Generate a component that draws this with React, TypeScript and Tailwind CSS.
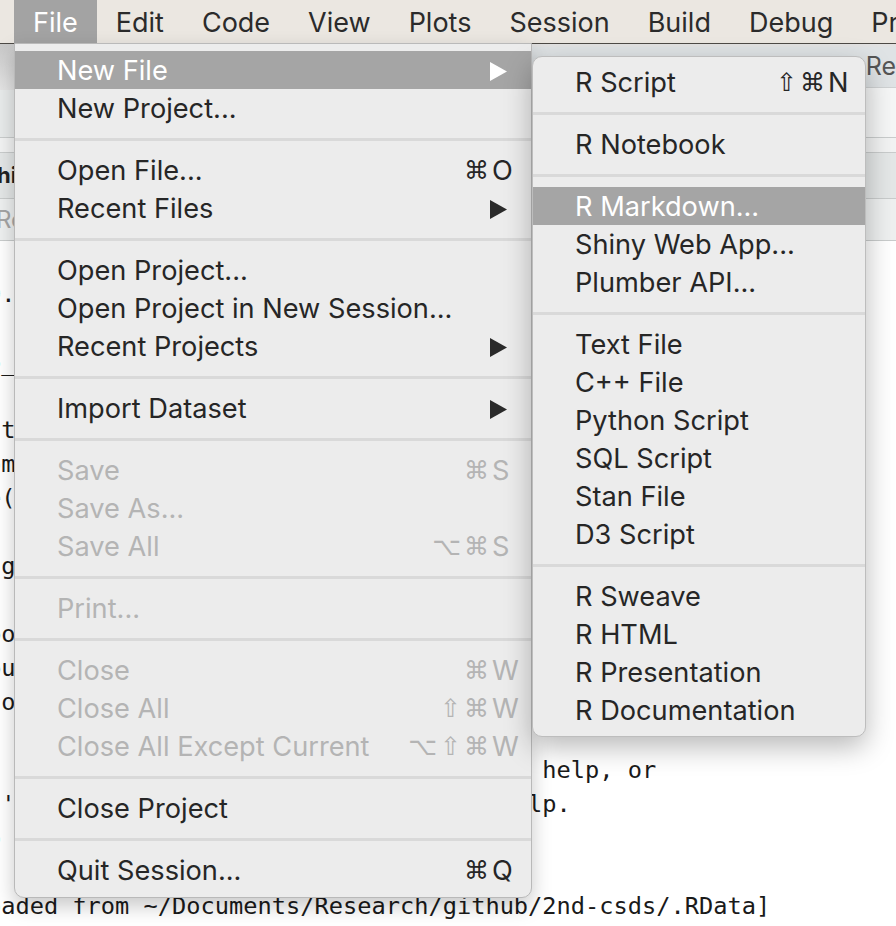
import React from 'react';

type Item =
  | { kind: 'sep' }
  | {
      kind: 'item';
      label: string;
      mods?: string;
      keyChar?: string;
      arrow?: boolean;
      disabled?: boolean;
      active?: boolean;
    };

const sep: Item = { kind: 'sep' };

const fileMenu: Item[] = [
  { kind: 'item', label: 'New File', arrow: true, active: true },
  { kind: 'item', label: 'New Project...' },
  sep,
  { kind: 'item', label: 'Open File...', mods: '⌘', keyChar: 'O' },
  { kind: 'item', label: 'Recent Files', arrow: true },
  sep,
  { kind: 'item', label: 'Open Project...' },
  { kind: 'item', label: 'Open Project in New Session...' },
  { kind: 'item', label: 'Recent Projects', arrow: true },
  sep,
  { kind: 'item', label: 'Import Dataset', arrow: true },
  sep,
  { kind: 'item', label: 'Save', mods: '⌘', keyChar: 'S', disabled: true },
  { kind: 'item', label: 'Save As...', disabled: true },
  { kind: 'item', label: 'Save All', mods: '⌥⌘', keyChar: 'S', disabled: true },
  sep,
  { kind: 'item', label: 'Print...', disabled: true },
  sep,
  { kind: 'item', label: 'Close', mods: '⌘', keyChar: 'W', disabled: true },
  { kind: 'item', label: 'Close All', mods: '⇧⌘', keyChar: 'W', disabled: true },
  { kind: 'item', label: 'Close All Except Current', mods: '⌥⇧⌘', keyChar: 'W', disabled: true },
  sep,
  { kind: 'item', label: 'Close Project' },
  sep,
  { kind: 'item', label: 'Quit Session...', mods: '⌘', keyChar: 'Q' },
];

const newFileMenu: Item[] = [
  { kind: 'item', label: 'R Script', mods: '⇧⌘', keyChar: 'N' },
  sep,
  { kind: 'item', label: 'R Notebook' },
  sep,
  { kind: 'item', label: 'R Markdown...', active: true },
  { kind: 'item', label: 'Shiny Web App...' },
  { kind: 'item', label: 'Plumber API...' },
  sep,
  { kind: 'item', label: 'Text File' },
  { kind: 'item', label: 'C++ File' },
  { kind: 'item', label: 'Python Script' },
  { kind: 'item', label: 'SQL Script' },
  { kind: 'item', label: 'Stan File' },
  { kind: 'item', label: 'D3 Script' },
  sep,
  { kind: 'item', label: 'R Sweave' },
  { kind: 'item', label: 'R HTML' },
  { kind: 'item', label: 'R Presentation' },
  { kind: 'item', label: 'R Documentation' },
];

const consoleLines = [
  'R version 4.0.2 (2020-06-22) -- "Taking Off Again"',
  'Copyright (C) 2020 The R Foundation for Statistical Computing',
  'Platform: x86_64-apple-darwin17.0 (64-bit)',
  '',
  'R is free software and comes with ABSOLUTELY NO WARRANTY.',
  'You are welcome to redistribute it under certain conditions.',
  "Type 'license()' or 'licence()' for distribution details.",
  '',
  '  Natural language support but running in an English locale',
  '',
  'R is a collaborative project with many contributors.',
  "Type 'contributors()' for more information and",
  "'citation()' on how to cite R or R packages in publications.",
  '',
  "Type 'demo()' for some demos, 'help()' for on-line help, or",
  "'help.start()' for an HTML browser interface to help.",
  "Type 'q()' to quit R.",
  '',
  '[Workspace loaded from ~/Documents/Research/github/2nd-csds/.RData]',
];

const menuBar = ['File', 'Edit', 'Code', 'View', 'Plots', 'Session', 'Build', 'Debug', 'Profile', 'Tools', 'Help'];

function Arrow({ white }: { white?: boolean }) {
  return (
    <svg width="17" height="19" viewBox="0 0 17 19" className="-ml-[2px]">
      <polygon points="0,0 17,9.5 0,19" fill={white ? '#ffffff' : '#2a2a2a'} />
    </svg>
  );
}

function MenuList({ items, pr }: { items: Item[]; pr: string }) {
  return (
    <>
      {items.map((item, i) => {
        if (item.kind === 'sep') {
          return (
            <div key={i} className="h-[24px] flex items-center">
              <div className="h-[3px] w-full bg-[#d9d9d9]" />
            </div>
          );
        }
        const color = item.active
          ? 'text-white'
          : item.disabled
            ? 'text-[#b4b4b4]'
            : 'text-[#262626]';
        return (
          <div
            key={i}
            className={`flex h-[38px] items-center pt-[2px] pl-[42px] ${pr} ${color} ${item.active ? 'bg-[#a5a5a5]' : ''}`}
          >
            <span className="flex-1 whitespace-nowrap">{item.label}</span>
            {item.mods && (
              <span className="tracking-[3px] font-[family-name:'DejaVu_Sans',sans-serif] text-[25px]">{item.mods}</span>
            )}
            <span className="w-[30px] flex items-center">
              {item.keyChar}
              {item.arrow && <Arrow white={item.active} />}
            </span>
          </div>
        );
      })}
    </>
  );
}

export default function App() {
  return (
    <div className="relative w-[896px] h-[926px] overflow-hidden bg-white font-[family-name:Inter,'Noto_Sans',sans-serif]">
      {/* macOS menu bar */}
      <div className="flex h-[44px] items-stretch pl-[14px] bg-[#ebe7e1] border-b border-[#4d4a46] text-[27px] text-[#2b2b2b]">
        {menuBar.map((m) => (
          <div
            key={m}
            className={`flex items-center pt-[3px] px-[19px] whitespace-nowrap ${m === 'File' ? 'bg-[#a3a3a3] text-white' : ''}`}
          >
            {m}
          </div>
        ))}
      </div>

      {/* RStudio window behind the menus */}
      <div className="flex h-[93px]">
        <div className="w-[532px] flex flex-col">
          <div className="h-[46px] bg-gradient-to-b from-[#c9c9c9] to-[#e4e4e4]" />
          <div className="flex-1 bg-[#e8ebeb]" />
        </div>
        <div className="flex-1 flex flex-col">
          <div className="h-[3px] bg-[#e2e2e2]" />
          <div className="h-[40px] bg-[#dfe3e5] flex items-center pl-[335px] text-[25px] text-[#555555] whitespace-nowrap">
            Re
          </div>
          <div className="flex-1 bg-[#f5f6f6] border-t border-[#cfd2d3]" />
        </div>
      </div>
      <div className="h-[16px] bg-[#f2f3f3] border-y border-[#c9cccc]" />
      <div className="h-[45px] bg-[#e4e7e7] flex items-center">
        <span className="-ml-[3px] font-bold text-[22px] text-[#222222]">hin</span>
      </div>
      <div className="h-[43px] bg-[#eef0f0] border-y border-[#c9cccc] flex items-center">
        <span className="-ml-[4px] text-[24px] text-[#a6a6a6]">Re</span>
      </div>
      <div className="pt-[36px] -ml-[184px] font-[family-name:'DejaVu_Sans_Mono',monospace] text-[23.67px] text-[#1a1a1a]">
        {consoleLines.map((l, i) => (
          <div key={i} className="h-[34px] leading-[34px] whitespace-pre">
            {l}
          </div>
        ))}
      </div>

      {/* File menu */}
      <div className="absolute left-[14px] top-[43px] w-[518px] pt-[7px] pb-[8px] bg-[#ececec] border border-[#b9b9b9] rounded-b-[10px] shadow-[0_8px_20px_rgba(0,0,0,0.22)] text-[27.2px]">
        <MenuList items={fileMenu} pr="pr-[9px]" />
      </div>

      {/* New File submenu */}
      <div className="absolute left-[532px] top-[56px] w-[334px] pt-[6px] pb-[7px] bg-[#ececec] border border-[#bdbdbd] rounded-[10px] shadow-[0_10px_28px_rgba(0,0,0,0.28)] text-[27.2px]">
        <MenuList items={newFileMenu} pr="pr-[7px]" />
      </div>
    </div>
  );
}
